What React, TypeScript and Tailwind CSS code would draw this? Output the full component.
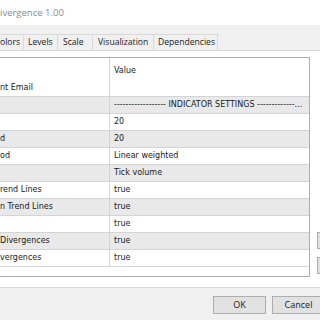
const tabs = [
  { label: 'olors', w: 'w-[24px]', cls: 'pl-0' },
  { label: 'Levels', w: 'w-[34px]', cls: 'pl-[4px]' },
  { label: 'Scale', w: 'w-[35px]', cls: 'pl-[5px]' },
  { label: 'Visualization', w: 'w-[61px]', cls: 'pl-[5px]' },
  { label: 'Dependencies', w: 'w-[64px]', cls: 'pl-[4px]' },
];

const rows = [
  { name: '', value: '------------------ INDICATOR SETTINGS -------------...' },
  { name: '', value: '20' },
  { name: 'd', value: '20' },
  { name: 'od', value: 'Linear weighted' },
  { name: '', value: 'Tick volume' },
  { name: 'rend Lines', value: 'true' },
  { name: 'n Trend Lines', value: 'true' },
  { name: '', value: 'true' },
  { name: 'Divergences', value: 'true' },
  { name: 'vergences', value: 'true' },
];

const App = () => {
  return (
    <div className="w-[320px] h-[320px] overflow-hidden bg-[#f0f0f0] flex flex-col font-['Open_Sans',sans-serif]">
      {/* title bar */}
      <div className="h-[25px] bg-white flex items-center shrink-0">
        <span className="text-[9.5px] text-[#8c8c8c] leading-none">ivergence 1.00</span>
      </div>

      {/* tabs */}
      <div className="h-[25px] flex items-end shrink-0">
        {tabs.map((t) => (
          <div
            key={t.label}
            className={`${t.w} ${t.cls} h-[16px] flex items-center border-r border-t border-[#d9d9d9] bg-[#f0f0f0] text-[8.6px] text-[#1a1a1a] whitespace-nowrap`}
          >
            {t.label}
          </div>
        ))}
      </div>

      {/* tab panel */}
      <div className="h-[238px] bg-white border-t border-b border-[#d9d9d9] shrink-0 pt-[6px] flex items-start">
        <div className="w-[310px] shrink-0 h-[220px] border-t border-r border-b border-[#adadad] flex flex-col font-['DejaVu_Sans',sans-serif] text-[8px] text-[#1a1a1a]">
          <div className="flex h-[21px] shrink-0">
            <div className="w-[110px] border-r border-[#d4d4d4]" />
            <div className="flex-1 pl-[4px] pt-[9px] leading-none">Value</div>
          </div>
          <div className="flex h-[18px] shrink-0 border-b border-[#d4d4d4]">
            <div className="w-[110px] border-r border-[#d4d4d4] flex items-center whitespace-nowrap">nt Email</div>
            <div className="flex-1" />
          </div>
          {rows.map((r, i) => (
            <div
              key={i}
              className={`flex h-[17px] shrink-0 border-b border-[#d4d4d4] ${i % 2 === 0 ? 'bg-[#e9e9e9]' : 'bg-white'}`}
            >
              <div className="w-[110px] border-r border-[#d4d4d4] flex items-center whitespace-nowrap overflow-hidden">
                {r.name}
              </div>
              <div className="flex-1 min-w-0 pl-[4px] pr-[3px] flex items-center whitespace-nowrap">
                {r.value}
              </div>
            </div>
          ))}
        </div>
        <div className="ml-[7px] shrink-0 h-[220px] flex flex-col justify-end gap-[8px] pb-[3px]">
          <div className="w-[12px] h-[17px] bg-[#e1e1e1] border border-[#adadad]" />
          <div className="w-[12px] h-[17px] bg-[#e1e1e1] border border-[#adadad]" />
        </div>
      </div>

      {/* buttons */}
      <div className="flex pl-[213px] pt-[8px] gap-[6px]">
        <div className="w-[53px] h-[18px] shrink-0 bg-[#e1e1e1] border border-[#adadad] flex items-center justify-center text-[9px] text-[#1a1a1a]">
          OK
        </div>
        <div className="w-[53px] h-[18px] shrink-0 bg-[#e1e1e1] border border-[#adadad] flex items-center justify-center text-[9px] text-[#1a1a1a]">
          Cancel
        </div>
      </div>
    </div>
  );
};

export default App;
